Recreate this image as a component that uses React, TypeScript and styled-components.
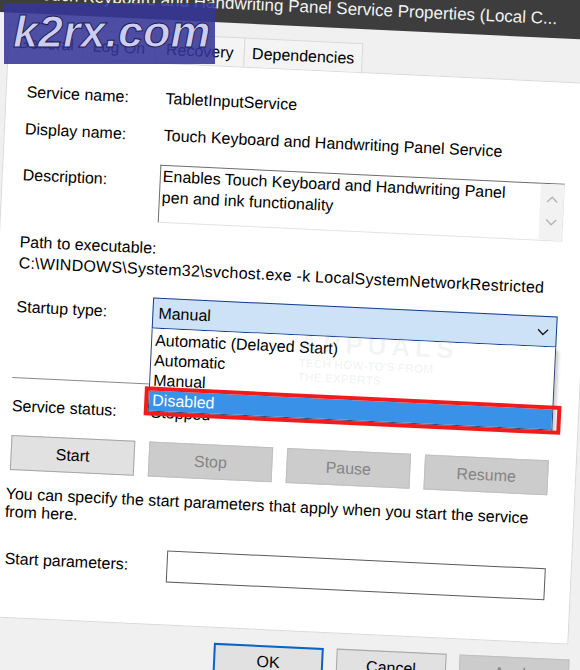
import styled, { createGlobalStyle } from "styled-components";

// ------------ global ------------
const GlobalStyle = createGlobalStyle`
  html, body {
    margin: 0;
    padding: 0;
    background: #f0f0f0;
  }
  body {
    font-family: "Liberation Sans", Arial, sans-serif;
  }
`;

const startupOptions = [
  "Automatic (Delayed Start)",
  "Automatic",
  "Manual",
  "Disabled",
];

const serviceButtons = [
  { label: "Start", disabled: false },
  { label: "Stop", disabled: true },
  { label: "Pause", disabled: true },
  { label: "Resume", disabled: true },
];

function Chevron({ color, up }: { color: string; up?: boolean }) {
  return (
    <svg width="12" height="8" viewBox="0 0 12 8">
      <polyline
        points={up ? "1,7 6,2 11,7" : "1,1.5 6,6.5 11,1.5"}
        fill="none"
        stroke={color}
        strokeWidth="1.4"
      />
    </svg>
  );
}

function App() {
  return (
    <>
      <GlobalStyle />
      <Page>
        <Dialog>
          {/* ------ title bar ------ */}
          <TitleBar>
            Touch Keyboard and Handwriting Panel Service Properties (Local C...
          </TitleBar>

          {/* ------ tabs ------ */}
          <TabStrip>
            <Tab $w={75} $active>
              General
            </Tab>
            <Tab $w={74}>Log On</Tab>
            <Tab $w={90}>Recovery</Tab>
            <Tab $w={119}>Dependencies</Tab>
          </TabStrip>

          {/* ------ general page ------ */}
          <Panel>
            <Field $gap={25}>
              <Label $w={139}>Service name:</Label>
              <span>TabletInputService</span>
            </Field>
            <Field $gap={17}>
              <Label $w={139}>Display name:</Label>
              <span>Touch Keyboard and Handwriting Panel Service</span>
            </Field>
            <Field $gap={19}>
              <Label $w={137} $pad={7}>
                Description:
              </Label>
              <DescBox>
                <DescText>
                  Enables Touch Keyboard and Handwriting Panel
                  <br />
                  pen and ink functionality
                </DescText>
                <ScrollRail>
                  <Chevron color="#b4b4b4" up />
                  <Chevron color="#b4b4b4" />
                </ScrollRail>
              </DescBox>
            </Field>

            <PathLabel>Path to executable:</PathLabel>
            <PathText>
              C:\WINDOWS\System32\svchost.exe -k LocalSystemNetworkRestricted
            </PathText>

            <Field $gap={18} $center>
              <Label $w={136}>Startup type:</Label>
              <ComboWrap>
                <Combo>
                  <span>Manual</span>
                  <Chevron color="#1a1a1a" />
                </Combo>
                <DropList>
                  {startupOptions.map((opt) => (
                    <DropItem key={opt} $selected={opt === "Disabled"}>
                      {opt}
                      {opt === "Disabled" && <Marker />}
                    </DropItem>
                  ))}
                </DropList>
              </ComboWrap>
            </Field>

            <Separator />

            <Field $gap={18}>
              <Label $w={139}>Service status:</Label>
              <span>Stopped</span>
            </Field>

            <ButtonRow>
              {serviceButtons.map((b) => (
                <PushButton key={b.label} $w={124} $disabled={b.disabled}>
                  {b.label}
                </PushButton>
              ))}
            </ButtonRow>

            <Note>
              You can specify the start parameters that apply when you start the
              service
              <br />
              from here.
            </Note>

            <Field $gap={22} $center>
              <Label $w={162}>Start parameters:</Label>
              <ParamInput />
            </Field>
          </Panel>

          {/* ------ dialog buttons ------ */}
          <Footer>
            <PushButton $w={110} $h={33} $default>
              OK
            </PushButton>
            <PushButton $w={110} $h={33}>
              Cancel
            </PushButton>
            <PushButton $w={110} $h={33} $disabled>
              Apply
            </PushButton>
          </Footer>
        </Dialog>

        {/* ------ watermarks ------ */}
        <FaintMark>
          <span className="brand">APPUALS</span>
          <span className="tag">TECH HOW-TO'S FROM</span>
          <span className="tag">THE EXPERTS</span>
        </FaintMark>
        <Stamp>k2rx.com</Stamp>
      </Page>
    </>
  );
}

export default App;

// ------- component styles -------
const Page = styled.div`
  position: relative;
  width: 580px;
  height: 670px;
  overflow: hidden;
  background: #f0f0f0;
`;

const Dialog = styled.div`
  display: flex;
  flex-direction: column;
  width: 620px;
  height: 720px;
  background: #f0f0f0;
  color: #000;
  font-size: 16px;
  line-height: 20px;
  transform: rotate(2.7deg);
  transform-origin: 0 0;
`;

const TitleBar = styled.div`
  box-sizing: border-box;
  height: 52px;
  margin-top: -40px;
  padding: 0 0 9px 33px;
  display: flex;
  align-items: flex-end;
  background: #3d3d3d;
  color: #f2f2f2;
  font-size: 17px;
  white-space: nowrap;
`;

const TabStrip = styled.div`
  position: relative;
  z-index: 1;
  display: flex;
  align-items: flex-end;
  height: 29px;
  margin-top: 14px;
  padding-left: 11px;
`;

const Tab = styled.div<{ $active?: boolean; $w: number }>`
  box-sizing: border-box;
  width: ${(p) => p.$w}px;
  height: ${(p) => (p.$active ? 32 : 29)}px;
  margin-bottom: ${(p) => (p.$active ? -1 : 0)}px;
  margin-left: -1px;
  padding-top: ${(p) => (p.$active ? 7 : 5)}px;
  text-align: center;
  background: ${(p) => (p.$active ? "#fff" : "#f4f4f4")};
  border: 1px solid #d9d9d9;
  border-bottom: none;
`;

const Panel = styled.div`
  box-sizing: border-box;
  display: flex;
  flex-direction: column;
  width: 588px;
  height: 562px;
  margin-left: 10px;
  padding-left: 20px;
  background: #fff;
  border: 1px solid #d9d9d9;
`;

const Field = styled.div<{ $gap: number; $center?: boolean }>`
  display: flex;
  align-items: ${(p) => (p.$center ? "center" : "flex-start")};
  margin-top: ${(p) => p.$gap}px;
  white-space: nowrap;
`;

const Label = styled.span<{ $w: number; $pad?: number }>`
  flex: none;
  width: ${(p) => p.$w}px;
  padding-top: ${(p) => p.$pad ?? 0}px;
`;

const DescBox = styled.div`
  box-sizing: border-box;
  display: flex;
  width: 405px;
  height: 58px;
  border-top: 1px solid #6d6d6d;
  border-left: 1px solid #6d6d6d;
  border-right: 1px solid #e3e3e3;
  border-bottom: 1px solid #e3e3e3;
`;

const DescText = styled.div`
  flex: 1;
  padding-left: 2px;
  line-height: 21px;
`;

const ScrollRail = styled.div`
  box-sizing: border-box;
  display: flex;
  flex-direction: column;
  justify-content: space-between;
  align-items: center;
  width: 23px;
  padding: 11px 0 14px;
  background: #f2f2f2;
`;

const PathLabel = styled.div`
  margin-top: 16px;
`;

const PathText = styled.div`
  margin-top: 1px;
  letter-spacing: 0.25px;
  white-space: nowrap;
`;

const ComboWrap = styled.div`
  position: relative;
  width: 405px;
`;

const Combo = styled.div`
  box-sizing: border-box;
  display: flex;
  align-items: center;
  justify-content: space-between;
  height: 31px;
  padding: 0 7px 0 5px;
  background: #cde2f6;
  border: 1px solid #123d8c;
`;

const DropList = styled.div`
  position: absolute;
  z-index: 2;
  top: 100%;
  left: 0;
  right: 0;
  padding-top: 2px;
  background: #fff;
  border: 1px solid #2f4778;
  border-top: none;
  box-shadow: 3px 3px 3px rgba(0, 0, 0, 0.18);
`;

const DropItem = styled.div<{ $selected?: boolean }>`
  position: relative;
  height: 20px;
  padding-left: 3px;
  background: ${(p) => (p.$selected ? "#3a92e8" : "transparent")};
  color: ${(p) => (p.$selected ? "#fff" : "#000")};
`;

const Marker = styled.span`
  position: absolute;
  top: -4px;
  bottom: -5px;
  left: -5px;
  right: -9px;
  border: 4px solid #f01c1c;
  pointer-events: none;
`;

const Separator = styled.div`
  width: 541px;
  height: 1px;
  margin-top: 55px;
  margin-left: -1px;
  background: #8a8a8a;
`;

const ButtonRow = styled.div`
  display: flex;
  gap: 14px;
  margin-top: 19px;
  margin-left: 1px;
`;

const PushButton = styled.div<{
  $w: number;
  $h?: number;
  $disabled?: boolean;
  $default?: boolean;
}>`
  box-sizing: border-box;
  display: flex;
  align-items: center;
  justify-content: center;
  width: ${(p) => p.$w}px;
  height: ${(p) => p.$h ?? 35}px;
  background: ${(p) => (p.$disabled ? "#cccccc" : "#e1e1e1")};
  border: ${(p) =>
    p.$default
      ? "2px solid #0a64c8"
      : p.$disabled
      ? "1px solid #bfbfbf"
      : "1px solid #a6a6a6"};
  color: ${(p) => (p.$disabled ? "#858585" : "#000")};
`;

const Note = styled.div`
  margin-top: 15px;
  margin-left: -2px;
  line-height: 18px;
  white-space: nowrap;
`;

const ParamInput = styled.div`
  box-sizing: border-box;
  width: 379px;
  height: 32px;
  background: #fff;
  border: 1px solid #5a5a5a;
`;

const Footer = styled.div`
  display: flex;
  gap: 13px;
  margin-top: 15px;
  padding-left: 244px;
`;

const Stamp = styled.div`
  position: absolute;
  left: 4px;
  top: 3px;
  box-sizing: border-box;
  width: 211px;
  height: 61px;
  padding: 5px 0 0 9px;
  background: rgba(54, 54, 152, 0.88);
  color: #cdcdf2;
  font: italic bold 45px/48px "Liberation Sans", Arial, sans-serif;
  -webkit-text-stroke: 1px #1c1c58;
  white-space: nowrap;
  overflow: hidden;
`;

const FaintMark = styled.div`
  position: absolute;
  left: 300px;
  top: 328px;
  display: flex;
  flex-direction: column;
  transform: rotate(2.7deg);
  transform-origin: 0 0;
  color: rgba(120, 130, 140, 0.09);
  font-family: "Liberation Sans", Arial, sans-serif;
  font-weight: bold;
  pointer-events: none;

  & > .brand {
    font-size: 26px;
    line-height: 28px;
    letter-spacing: 5px;
  }

  & > .tag {
    font-size: 12px;
    line-height: 14px;
  }
`;
